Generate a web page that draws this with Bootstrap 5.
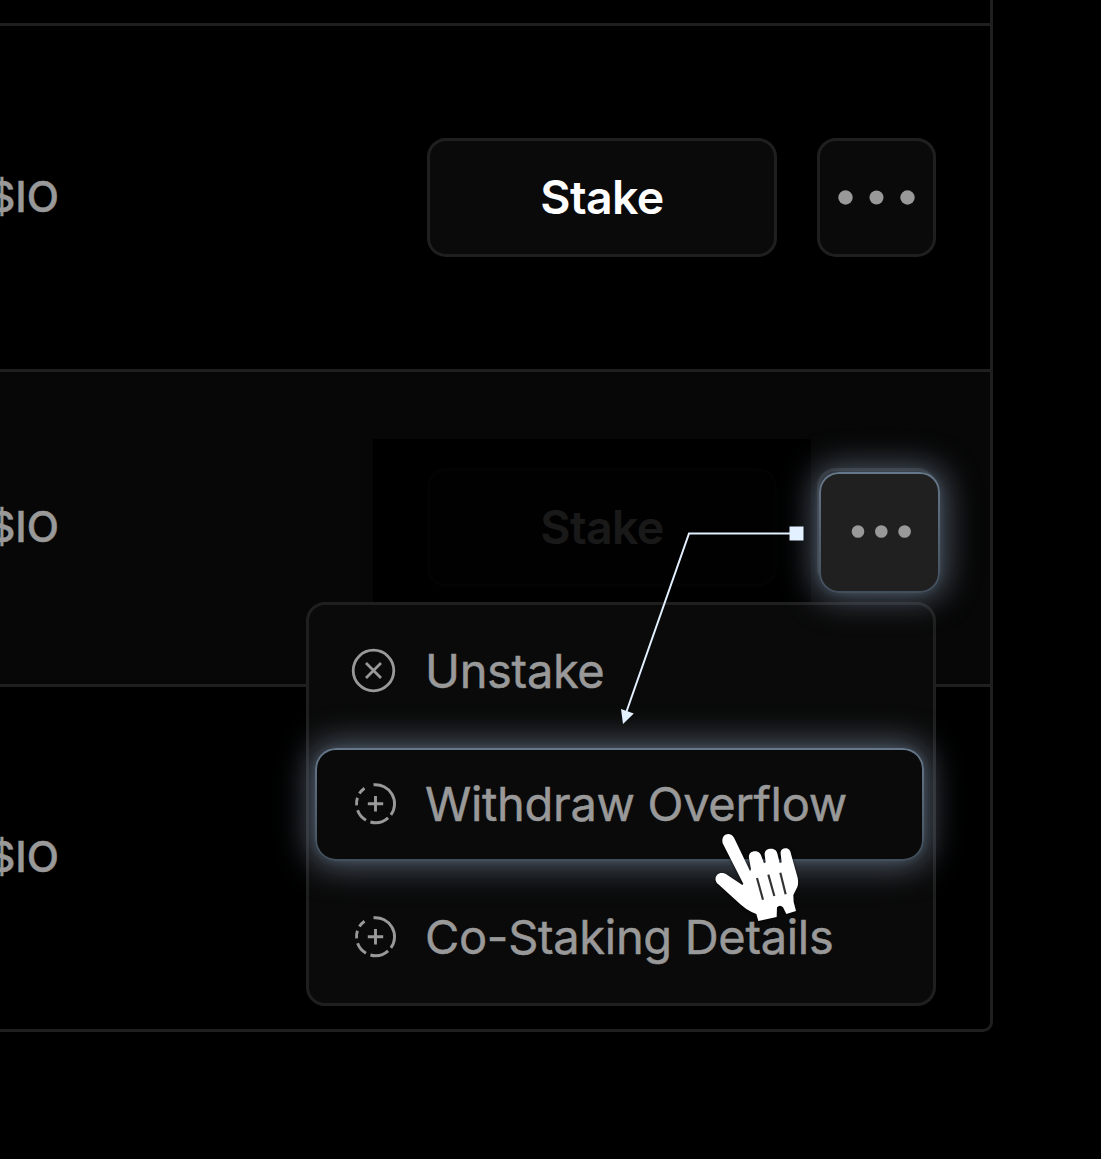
<!DOCTYPE html>
<html lang="en" data-bs-theme="dark">
<head>
<meta charset="utf-8">
<meta name="viewport" content="width=device-width, initial-scale=1">
<title>Staking pools</title>
<link href="https://cdn.jsdelivr.net/npm/bootstrap@5.3.0/dist/css/bootstrap.min.css" rel="stylesheet">
<style>
  body { background: #000; font-family: Inter, sans-serif; height: 1159px; overflow: hidden; }
  .pool-frame { width: 993px; height: 1032px; border: solid #1f1f1f; border-width: 0 3px 3px 0; border-bottom-right-radius: 10px; }
  .pool-head { height: 23px; }
  .pool-row { border-top: 3px solid #1f1f1f; height: 346px; padding-right: 54px; }
  .pool-row.is-active { height: 315px; background: #070707; }
  .pool-row.is-last { height: 345px; }
  .pool-value { width: 59px; overflow: hidden; color: #999; font-size: 42px; font-weight: 500; line-height: 60px; margin-top: -2px; -webkit-text-stroke: .5px #999; }
  .pool-actions { gap: 40px; }
  .act-btn { --bs-btn-bg: #0a0a0a; --bs-btn-border-color: #1f1f1f; --bs-btn-border-width: 3px; --bs-btn-border-radius: 19px; --bs-btn-color: #fff; --bs-btn-padding-x: 0; --bs-btn-padding-y: 0; height: 119px; width: 119px; }
  .act-stake { width: 350px; font-size: 46.5px; font-weight: 600; letter-spacing: -.6px; }
  .is-active .act-btn { margin-top: -1px; }
  .dim-mask { left: 373px; top: 67px; width: 438px; height: 163px; background: rgba(0,0,0,.9); z-index: 3; }
  .glow { border: 2px solid transparent; box-shadow: 0 0 6px 1px rgba(125,142,165,.14), 0 0 32px 6px rgba(125,142,165,.62); }
  .dots-active { left: 819px; top: 100px; width: 121px; height: 121px; border-radius: 20px; z-index: 4; padding-bottom: 1px;
    background: linear-gradient(#202020,#202020) padding-box, linear-gradient(#66788b,#414e5b) border-box; }
  .pool-menu { left: 306px; top: 230px; width: 630px; height: 404px; padding: 10px 9px 8px 6px; gap: 20px; background: #0a0a0a; border: 3px solid #1f1f1f; border-radius: 19px; z-index: 2; }
  .menu-entry { height: 113px; padding-left: 34px; padding-bottom: 2px; color: #999; font-size: 47px; letter-spacing: -.32px; line-height: 60px; -webkit-text-stroke: .5px #999; border: 2px solid transparent; border-radius: 21px; white-space: nowrap; }
  .menu-entry svg { width: 46px; height: 46px; flex: none; margin-right: 28px; }
  .menu-entry.glow { background: linear-gradient(#0a0a0a,#0a0a0a) padding-box, linear-gradient(#66788b,#414e5b) border-box; }
  .overlay-art { left: 0; top: 0; z-index: 10; pointer-events: none; }
</style>
</head>
<body class="position-relative">
<svg class="d-none">
  <symbol id="split-plus" viewBox="0 0 46 46">
    <g fill="none" stroke="#999" stroke-width="2.9" transform="translate(3.5 1.7)">
      <path d="M19 2.1A19 19 0 0 1 36.4 32.2M33.6 35.2A19 19 0 0 1 15.9 39.3M11.5 37.5A19 19 0 0 1 3.1 27.5M2.1 22.7A19 19 0 0 1 2.9 15.1M4.9 10.9A19 19 0 0 1 10 5.5M21 13.3V28.7M13.3 21H28.7"/>
    </g>
  </symbol>
</svg>
<main class="pool-frame">
  <div class="pool-head"></div>
  <div class="pool-row d-flex align-items-center justify-content-between">
    <div class="pool-value d-flex justify-content-end"><span>$IO</span></div>
    <div class="pool-actions d-flex">
      <button class="btn act-btn act-stake">Stake</button>
      <button class="btn act-btn d-flex align-items-center justify-content-center" aria-label="More">
        <svg width="80" height="16" fill="#999"><circle cx="8.5" cy="7.5" r="7.2"/><circle cx="39.5" cy="7.5" r="7"/><circle cx="70.5" cy="7.5" r="7.2"/></svg>
      </button>
    </div>
  </div>
  <div class="pool-row is-active position-relative d-flex align-items-center justify-content-between">
    <div class="pool-value d-flex justify-content-end"><span>$IO</span></div>
    <div class="pool-actions d-flex">
      <button class="btn act-btn act-stake">Stake</button>
      <button class="btn act-btn" aria-label="More"></button>
    </div>
    <div class="dim-mask position-absolute"></div>
    <div class="dots-active glow position-absolute d-flex align-items-center justify-content-center">
      <svg width="64" height="14" fill="#999"><circle cx="10" cy="6.5" r="6.3"/><circle cx="33.3" cy="6.5" r="6.3"/><circle cx="56.6" cy="6.5" r="6.3"/></svg>
    </div>
    <div class="pool-menu position-absolute d-flex flex-column">
      <div class="menu-entry d-flex align-items-center">
        <svg viewBox="0 0 46 46"><g fill="none" stroke="#999" stroke-width="2.8"><circle cx="22.5" cy="22.5" r="20.3"/><path d="M15 15l15 15M30 15L15 30"/></g></svg><span>Unstake</span>
      </div>
      <div class="menu-entry glow d-flex align-items-center">
        <svg><use href="#split-plus"/></svg><span>Withdraw Overflow</span>
      </div>
      <div class="menu-entry d-flex align-items-center">
        <svg><use href="#split-plus"/></svg><span>Co-Staking Details</span>
      </div>
    </div>
  </div>
  <div class="pool-row is-last d-flex align-items-center">
    <div class="pool-value d-flex justify-content-end"><span>$IO</span></div>
  </div>
</main>
<svg class="overlay-art position-absolute" width="1101" height="1159">
  <path d="M797 533.5H689L626 713" fill="none" stroke="#e3f0ff" stroke-width="2"/>
  <path d="M789.5 526.5h14v14h-14zM621 709l12.8 4.4L623 724z" fill="#e3f0ff"/>
  <g transform="translate(680 810) scale(.33333)" style="filter:drop-shadow(0 2px 4px rgba(0,0,0,.8))">
    <path fill="#fff" d="M128 100C124 83 133 72 145 72C155 72 161 80 165 89L210 183L213 178L207 145C205 132 213 124 225 124C237 124 243 132 246 144L252 160L257 157L254 134C253 122 262 116 273 116C285 116 291 123 293 134L299 159L305 157L302 132C300 121 307 115 317 115C327 115 331 122 333 132L353 203Q356 221 352 231L340 255L341 276L348 303L319 312L309 292Q300 283 291 292L290 321L235 333L229 312Q213 306 199 297L181 283L115 223C105 215 104 203 111 195C119 187 132 188 142 195L187 225L190 221Z"/>
    <path d="M231 204l18 65M265 194l18 64M301 188l16 65" stroke="#333" stroke-width="6.5" fill="none"/>
  </g>
</svg>
<script src="https://cdn.jsdelivr.net/npm/bootstrap@5.3.0/dist/js/bootstrap.bundle.min.js"></script>
</body>
</html>
